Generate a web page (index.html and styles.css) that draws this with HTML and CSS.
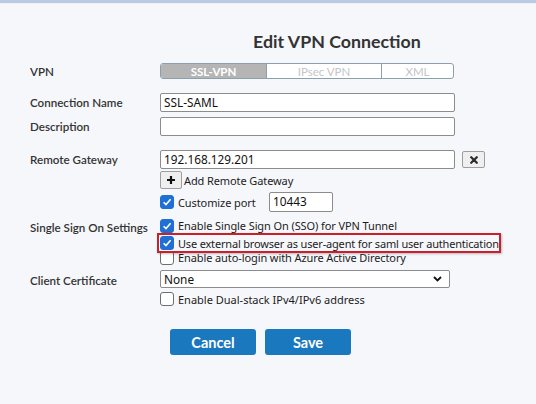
FILE: index.html
```html
<!DOCTYPE html>
<html>
<head>
<meta charset="utf-8">
<link rel="stylesheet" href="styles.css">
</head>
<body>
<div class="topbar"></div>
<main class="dialog">
  <h1 class="title">Edit VPN Connection</h1>

  <div class="row row-vpn">
    <div class="lbl">VPN</div>
    <div class="seg">
      <span class="seg-item seg-ssl active">SSL-VPN</span>
      <span class="seg-item seg-ipsec">IPsec VPN</span>
      <span class="seg-item seg-xml">XML</span>
    </div>
  </div>

  <div class="row row-name">
    <div class="lbl">Connection Name</div>
    <div class="input wide">SSL-SAML</div>
  </div>

  <div class="row row-desc">
    <div class="lbl">Description</div>
    <div class="input wide"></div>
  </div>

  <div class="row row-gw">
    <div class="lbl">Remote Gateway</div>
    <div class="field">
      <div class="gw-line">
        <div class="input wide">192.168.129.201</div>
        <span class="icon-btn del"><svg width="8" height="8" viewBox="0 0 8 8"><path d="M1.2 1.2 L6.8 6.8 M6.8 1.2 L1.2 6.8" stroke="#2b2b2b" stroke-width="2.2" stroke-linecap="round"/></svg></span>
      </div>
      <div class="add-line">
        <span class="icon-btn plus"><svg width="10" height="10" viewBox="0 0 10 10"><path d="M5 1 V9 M1 5 H9" stroke="#111" stroke-width="2.2"/></svg></span>
        <span class="txt">Add Remote Gateway</span>
      </div>
      <div class="port-line">
        <span class="cb on"><svg width="10" height="10" viewBox="0 0 10 10"><path d="M1.6 5.2 L4 7.6 L8.6 2.2" fill="none" stroke="#fff" stroke-width="1.6"/></svg></span>
        <span class="txt">Customize port</span>
        <div class="input port">10443</div>
      </div>
    </div>
  </div>

  <div class="row row-sso">
    <div class="lbl lbl-sso">Single Sign On Settings</div>
    <div class="field">
      <div class="check-line">
        <span class="cb on"><svg width="10" height="10" viewBox="0 0 10 10"><path d="M1.6 5.2 L4 7.6 L8.6 2.2" fill="none" stroke="#fff" stroke-width="1.6"/></svg></span>
        <span class="txt">Enable Single Sign On (SSO) for VPN Tunnel</span>
      </div>
      <div class="highlight">
        <div class="check-line">
          <span class="cb on"><svg width="10" height="10" viewBox="0 0 10 10"><path d="M1.6 5.2 L4 7.6 L8.6 2.2" fill="none" stroke="#fff" stroke-width="1.6"/></svg></span>
          <span class="txt">Use external browser as user-agent for saml user authentication</span>
        </div>
      </div>
      <div class="check-line after-hl">
        <span class="cb"></span>
        <span class="txt">Enable auto-login with Azure Active Directory</span>
      </div>
    </div>
  </div>

  <div class="row row-cert">
    <div class="lbl">Client Certificate</div>
    <div class="field">
      <div class="select">
        <span>None</span>
        <svg width="9" height="6" viewBox="0 0 9 6"><path d="M1 1 L4.5 4.5 L8 1" fill="none" stroke="#111" stroke-width="1.8"/></svg>
      </div>
      <div class="check-line dual">
        <span class="cb"></span>
        <span class="txt">Enable Dual-stack IPv4/IPv6 address</span>
      </div>
    </div>
  </div>

  <div class="actions">
    <button class="btn">Cancel</button>
    <button class="btn">Save</button>
  </div>
</main>
</body>
</html>
```

FILE: styles.css
```css
* { box-sizing: border-box; }
html, body { margin: 0; padding: 0; }
body {
  width: 536px;
  height: 404px;
  background: #f6f7fb;
  font-family: "Noto Sans", "Open Sans", sans-serif;
  color: #222;
  overflow: hidden;
}
.topbar {
  height: 4px;
  background: #b7cce3;
  border-bottom: 1px solid #f7eef1;
}
.dialog {
  padding-left: 30px;
}
.title {
  margin: 26px 0 0 223px;
  font-family: Lato, sans-serif;
  font-weight: 700;
  font-size: 17.8px;
  line-height: 22px;
  color: #333;
}
.row {
  display: flex;
  align-items: center;
}
.lbl {
  width: 130px;
  flex: none;
  font-family: Lato, sans-serif;
  font-weight: 600;
  font-size: 11.6px;
  color: #333;
}
.field { display: flex; flex-direction: column; }
.row-vpn { margin-top: 11px; }
.seg {
  display: flex;
  height: 16px;
  border: 1px solid #8aa0ad;
  border-radius: 3px;
  overflow: hidden;
  background: #fff;
  font-family: Lato, sans-serif;
  font-size: 11.5px;
}
.seg-item {
  display: flex;
  align-items: center;
  justify-content: center;
  color: #c3c6c9;
  border-left: 1px solid #8aa0ad;
}
.seg-item:first-child { border-left: 0; }
.seg-ssl { width: 105px; }
.seg-ipsec { width: 115px; }
.seg-xml { width: 72px; }
.seg-item.active { background: #b5b5b5; color: #fff; font-weight: 700; }

.input {
  height: 19px;
  background: #fff;
  border: 1px solid #8c8c8c;
  border-radius: 2px;
  padding: 0 3px;
  font-size: 11.8px;
  line-height: 17px;
  color: #111;
}
.wide { width: 295px; }
.row-name { margin-top: 14px; }
.row-desc { margin-top: 5px; }
.row-gw { margin-top: 14px; align-items: flex-start; }
.row-gw .lbl { line-height: 19px; }
.gw-line { display: flex; align-items: center; gap: 7px; }
.icon-btn {
  display: flex;
  align-items: center;
  justify-content: center;
  background: #efefef;
  border: 1px solid #9e9e9e;
  border-radius: 2px;
}
.del { width: 23px; height: 17px; }
.add-line { display: flex; align-items: center; margin-top: 2px; height: 18px; }
.plus { width: 22px; height: 18px; margin-right: 2px; }
.txt { font-size: 11px; letter-spacing: -0.1px; line-height: 15px; color: #1c1c1c; white-space: nowrap; }
.port-line { display: flex; align-items: center; margin-top: 3px; height: 20px; }
.port-line .cb { margin-right: 4px; }
.port { width: 64px; height: 20px; }
.port-line .txt { width: 91px; }

.cb {
  width: 14px;
  height: 14px;
  flex: none;
  display: flex;
  align-items: center;
  justify-content: center;
  border: 1px solid #6e6e6e;
  border-radius: 3px;
  background: #fff;
  margin-right: 4px;
}
.cb.on { background: #1f6fd5; border-color: #1f6fd5; }
.check-line { display: flex; align-items: center; height: 15px; }
.row-sso { margin-top: 6px; align-items: flex-start; }
.lbl-sso { padding-top: 3px; }
.highlight {
  position: relative;
  z-index: 1;
  margin-left: -3px;
  width: 344px;
  padding: 0 0 0 1px;
  border: 2px solid #cc1f2c;
  box-shadow: 1px 1px 2px rgba(0,0,0,0.25);
}
.highlight .check-line { height: 16px; }
.highlight .txt { letter-spacing: -0.18px; }
.after-hl { margin-top: -3px; }

.row-cert { margin-top: 5px; align-items: flex-start; }
.row-cert .lbl { line-height: 18px; padding-top: 2px; }
.select {
  width: 290px;
  height: 18px;
  background: #fff;
  border: 1px solid #8c8c8c;
  border-radius: 2px;
  padding: 0 7px 0 3px;
  display: flex;
  align-items: center;
  justify-content: space-between;
  font-size: 11.8px;
  color: #111;
}
.dual { margin-top: 3px; height: 16px; }
.dual .txt { letter-spacing: 0; }

.actions {
  margin: 22px 0 0 140px;
  display: flex;
  gap: 9px;
}
.btn {
  width: 86px;
  height: 26px;
  border: 0;
  border-radius: 3px;
  background: #1a78be;
  color: #fff;
  font-family: Lato, sans-serif;
  font-weight: 700;
  font-size: 14.5px;
  padding: 0;
}
```
